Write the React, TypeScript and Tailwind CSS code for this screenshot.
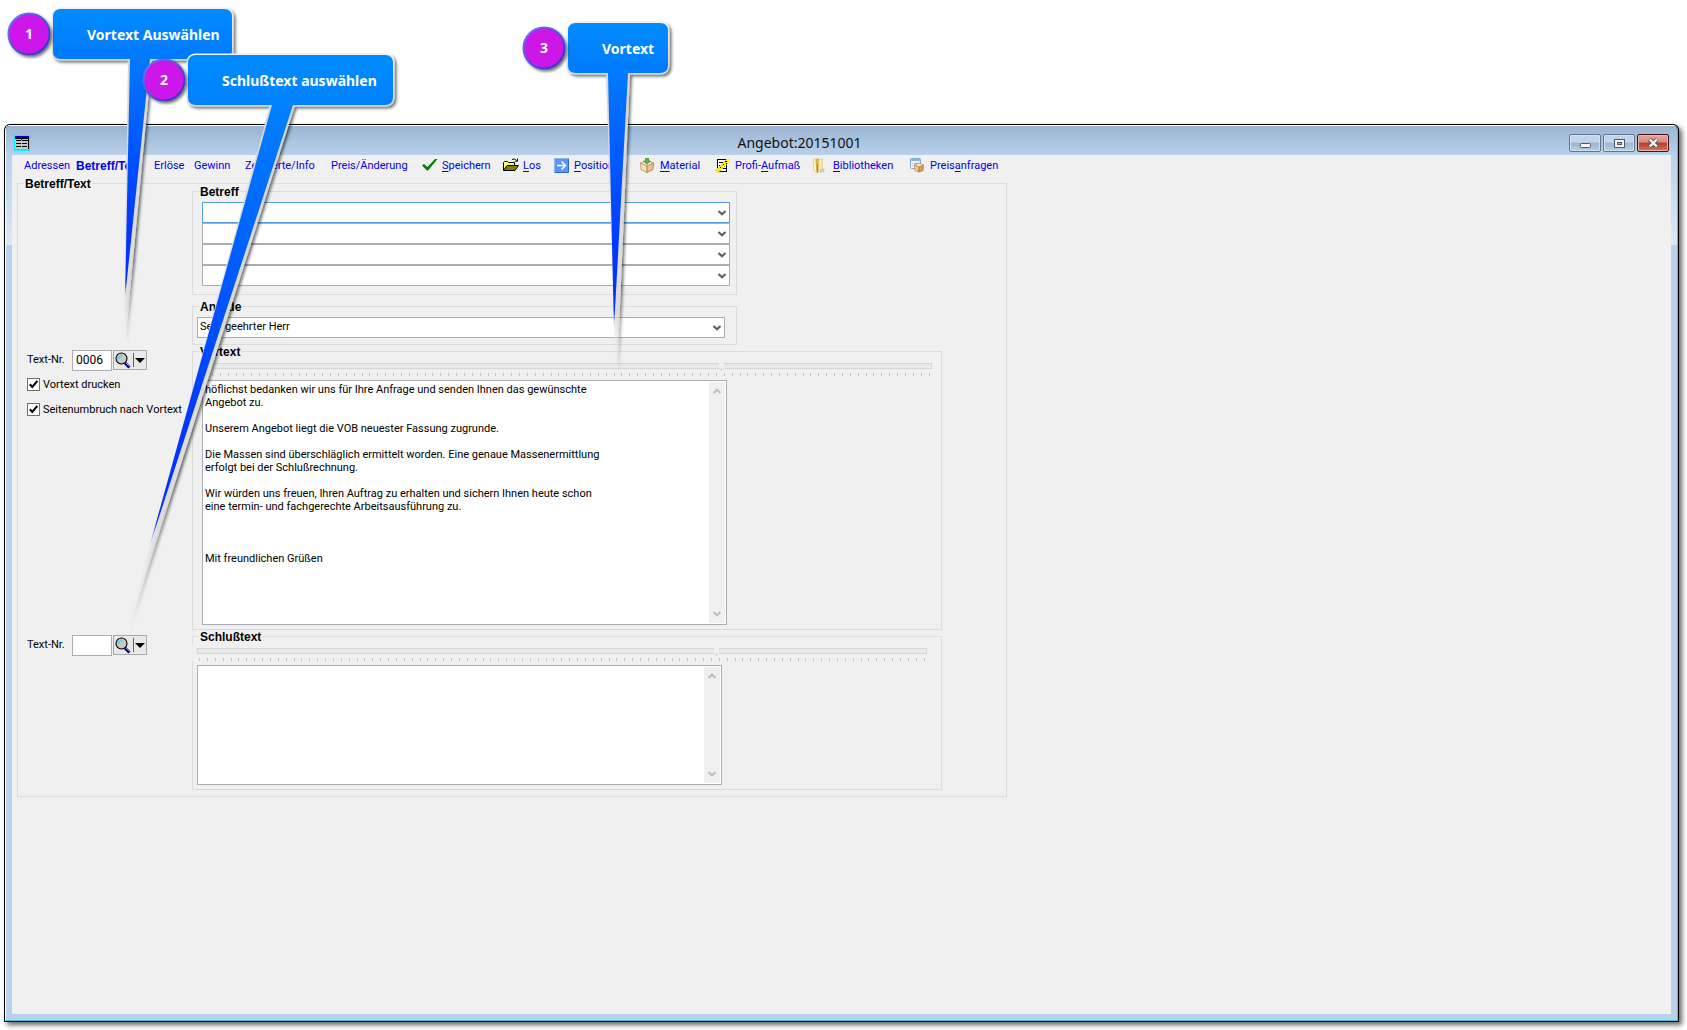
import React, { useState } from "react";

const VORTEXT = `höflichst bedanken wir uns für Ihre Anfrage und senden Ihnen das gewünschte
Angebot zu.

Unserem Angebot liegt die VOB neuester Fassung zugrunde.

Die Massen sind überschläglich ermittelt worden. Eine genaue Massenermittlung
erfolgt bei der Schlußrechnung.

Wir würden uns freuen, Ihren Auftrag zu erhalten und sichern Ihnen heute schon
eine termin- und fachgerechte Arbeitsausführung zu.



Mit freundlichen Grüßen`;

/* ---------- icons ---------- */

function FormIcon() {
  return (
    <svg width="16" height="16" viewBox="0 0 16 16" shapeRendering="crispEdges" aria-hidden="true">
      <rect width="16" height="16" fill="#00f0ff" />
      <rect x="1" y="1" width="14" height="13" fill="#c8c8c8" />
      <rect x="1" y="1" width="14" height="2" fill="#0000c0" />
      <path d="M1 3h14v1H1zM14 3h1v11h-1zM2 5h5v1H2zM8 5h6v1H8zM2 8h5v1H2zM8 8h5v1H8zM2 11h5v1H2zM8 11h5v1H8zM7 3h1v2H7z" fill="#000" />
    </svg>
  );
}

function CheckIcon() {
  return (
    <svg width="16" height="16" viewBox="0 0 16 16" aria-hidden="true">
      <path d="M0 7.500 2 6l3.500 3L13 1h2.500L6 12.500H5z" fill="#008000" />
    </svg>
  );
}

function FolderIcon() {
  return (
    <svg width="16" height="16" viewBox="0 0 16 16" aria-hidden="true">
      <path d="M.5 12.500v-8l1-1h3l1 1h6v3" fill="#ffff66" stroke="#000" />
      <path d="M.5 12.500 4 7.500h11.500l-3.500 5z" fill="#808000" stroke="#000" />
      <path d="M9 2C10 .5 12 .5 13.500 2.500M14.500.5v2.700h-2.700" fill="none" stroke="#000" />
    </svg>
  );
}

function ArrowIcon() {
  return (
    <svg width="16" height="16" viewBox="0 0 16 16" aria-hidden="true">
      <rect x=".5" y=".5" width="14" height="14" fill="#5b94f8" stroke="#8fb3f5" />
      <path d="M14.500 1v13.500H1" fill="none" stroke="#3565c4" />
      <path d="M3 7.500h8M7.500 3.500l4 4-4 4" fill="none" stroke="#fff" strokeWidth="1.600" />
    </svg>
  );
}

function BoxIcon() {
  return (
    <svg width="16" height="16" viewBox="0 0 16 16" aria-hidden="true">
      <path d="M.5 5 7 8v6.500L1 11.500z" fill="#f6e2bb" stroke="#b98f4e" strokeWidth=".8" />
      <path d="M13.500 5 7 8v6.500l6-3z" fill="#e6c48c" stroke="#a87b3a" strokeWidth=".8" />
      <path d="M.5 5 7 2.500 13.500 5 7 8z" fill="#fdf3dc" stroke="#b98f4e" strokeWidth=".8" />
      <path d="M5.500 0h3v3h2L7 6.500 3.500 3h2z" fill="#5cb84a" stroke="#2e7d27" strokeWidth=".6" />
    </svg>
  );
}

function MeasureIcon() {
  return (
    <svg width="16" height="16" viewBox="0 0 16 16" shapeRendering="crispEdges" aria-hidden="true">
      <path d="M2.500 1.500h9v12h-9z" fill="#fff" stroke="#000" />
      <path d="M4 4.500h5M4 7.500h3M8 10.500h3" stroke="#000" />
      <path d="M.5 12.500 11.500 1l2.500 1.500L3 14.500z" fill="#ffee00" stroke="#d8c800" strokeWidth=".5" />
      <path d="M2.500 12.500 12 2.500" stroke="#000" strokeDasharray="1 3" />
    </svg>
  );
}

function BinderIcon() {
  return (
    <svg width="16" height="16" viewBox="0 0 16 16" aria-hidden="true">
      <path d="M.5 1.500 3 .5l1 12L2.500 14 .5 12z" fill="#fff3b8" stroke="#e0c468" strokeWidth=".6" />
      <path d="M3 1.500 5.500.5v12L4 15z" fill="#d8b64c" stroke="#b89434" strokeWidth=".5" />
      <path d="M5.500 2.500 9.500 1v11L5.500 14.500z" fill="#fbe9a0" stroke="#e0c468" strokeWidth=".6" />
      <path d="M4.500 6v8.500" stroke="#8a8a8a" />
      <path d="M7.500 11.500 11 11v2.500L7.500 14.500z" fill="#d4d4d4" stroke="#aaa" strokeWidth=".5" />
    </svg>
  );
}

function PriceIcon() {
  return (
    <svg width="16" height="16" viewBox="0 0 16 16" aria-hidden="true">
      <rect x=".5" y=".5" width="10" height="10" rx="1" fill="#e9f3fc" stroke="#7fa9cf" />
      <rect x="1" y="1" width="9" height="2" fill="#86b6e3" />
      <path d="M2 5.500h1M4 5.500h5M2 7.500h1M4 7.500h2" stroke="#a5c6e4" />
      <path d="M4.500 7l4.500 2v5L5 12.500z" fill="#f1cf96" stroke="#b5803a" strokeWidth=".7" />
      <path d="M13.500 7 9 9v5l4-1.500z" fill="#d99f55" stroke="#a87030" strokeWidth=".7" />
      <path d="M4.500 7 9 5l4.500 2L9 9z" fill="#fbe6c0" stroke="#b5803a" strokeWidth=".7" />
    </svg>
  );
}

function SearchIcon() {
  return (
    <svg width="16" height="17" viewBox="0 0 16 17" aria-hidden="true">
      <path d="M10 11l4.500 4.500" stroke="#000080" strokeWidth="3" />
      <path d="M10.500 10.500l4 4" stroke="#b8b8ff" strokeWidth=".8" />
      <circle cx="6.500" cy="6.500" r="5.500" fill="#c8c8c8" stroke="#000" strokeWidth="1.100" />
      <path d="M3.500 7C3.500 4.800 4.800 3.500 7 3.500" fill="none" stroke="#00e5ff" strokeWidth="1.400" strokeDasharray="3 1" />
    </svg>
  );
}

function Chevron({ up = false, color }: { up?: boolean; color: string }) {
  return (
    <svg width="8" height="6" viewBox="0 0 8 6" className={up ? "rotate-180" : ""} aria-hidden="true">
      <path d="M.5 1 4 4.300 7.500 1" fill="none" stroke={color} strokeWidth="2.200" />
    </svg>
  );
}

/* ---------- form parts ---------- */

function Group({
  title,
  className,
  inner = "",
  children,
}: {
  title: string;
  className: string;
  inner?: string;
  children: React.ReactNode;
}) {
  return (
    <fieldset className={"min-w-0 border border-[#dcdcdc] " + className}>
      <legend className="ml-[6px] h-px px-px text-xs leading-[3px] font-bold whitespace-nowrap text-black">{title}</legend>
      <div className={inner}>{children}</div>
    </fieldset>
  );
}

function Combo({ label, value = "", active = false }: { label: string; value?: string; active?: boolean }) {
  return (
    <div className="relative h-[21px] w-[528px]">
      <select
        aria-label={label}
        defaultValue={value}
        className={
          "h-full w-full appearance-none border bg-white pr-5 pl-[2px] font-['Roboto',sans-serif] outline-none " +
          (active ? "border-[#569de5]" : "border-[#abadb3]")
        }
      >
        <option>{value}</option>
      </select>
      <span className="pointer-events-none absolute inset-y-0 right-1 flex items-center">
        <Chevron color="#606060" />
      </span>
    </div>
  );
}

function WidthSlider({ label }: { label: string }) {
  return (
    <div className="w-[730px]">
      <input
        type="range"
        aria-label={label}
        min={0}
        max={730}
        defaultValue={521}
        className="block h-[6px] w-full appearance-none border border-[#d6d6d6] bg-[#e7eaea] outline-none [&::-webkit-slider-thumb]:h-[10px] [&::-webkit-slider-thumb]:w-[5px] [&::-webkit-slider-thumb]:appearance-none [&::-webkit-slider-thumb]:bg-[linear-gradient(#f0f0f0_70%,#c4c4c4)] [&::-webkit-slider-thumb]:[clip-path:polygon(0_0,100%_0,100%_75%,50%_100%,0_75%)]"
      />
      <div className="mt-1 flex h-[3px] justify-between px-[2px]">
        {Array.from({ length: 93 }, (_, i) => (
          <span key={i} className="w-px bg-[#c4c4c4]" />
        ))}
      </div>
    </div>
  );
}

function Memo({ label, text, className }: { label: string; text: string; className: string }) {
  return (
    <div className={"mt-1 flex w-[525px] border border-[#abadb3] bg-white p-px " + className}>
      <textarea
        aria-label={label}
        defaultValue={text}
        className="block flex-1 resize-none overflow-hidden pt-px pl-px font-['Roboto',sans-serif] leading-[13px] whitespace-pre outline-none"
      />
      <div className="flex w-4 flex-col justify-between bg-[#f0f0f0] py-[6px]">
        <button type="button" aria-label="Nach oben" className="flex justify-center">
          <Chevron up color="#bfbfbf" />
        </button>
        <button type="button" aria-label="Nach unten" className="flex justify-center">
          <Chevron color="#bfbfbf" />
        </button>
      </div>
    </div>
  );
}

function TextNumber({ id, value }: { id: string; value: string }) {
  return (
    <div className="flex items-start pl-[9px]">
      <label htmlFor={id} className="w-[45px] leading-5">
        Text-Nr.
      </label>
      <input
        id={id}
        defaultValue={value}
        className="h-[21px] w-10 border border-[#abadb3] bg-white pb-px pl-[3px] text-xs outline-none"
      />
      <button
        type="button"
        aria-label="Text suchen"
        className="ml-px flex h-5 w-[34px] items-center border border-[#a9a9a9] bg-[#e9e9e9] pl-px"
      >
        <SearchIcon />
        <span className="ml-[2px] h-[14px] w-px bg-[#606060]" />
        <svg width="10" height="5" viewBox="0 0 10 5" className="ml-px" aria-hidden="true">
          <path d="M0 0h10L5 5z" fill="#000" />
        </svg>
      </button>
    </div>
  );
}

function Check({ label, className }: { label: string; className: string }) {
  const [on, setOn] = useState(true);
  return (
    <label className={"relative flex items-center gap-[3px] pl-[9px] leading-[13px] whitespace-nowrap " + className}>
      <input
        type="checkbox"
        checked={on}
        onChange={() => setOn(!on)}
        className="size-[13px] appearance-none border border-[#707070] bg-white"
      />
      {on && (
        <svg width="9" height="9" viewBox="0 0 9 9" className="pointer-events-none absolute left-[11px]" aria-hidden="true">
          <path d="M.8 4.300 3.300 7 8.300 1" fill="none" stroke="#000" strokeWidth="2" />
        </svg>
      )}
      {label}
    </label>
  );
}

/* ---------- toolbar ---------- */

const tools = [
  { icon: <CheckIcon />, pre: "", key: "S", post: "peichern" },
  { icon: <FolderIcon />, pre: "", key: "L", post: "os" },
  { icon: <ArrowIcon />, pre: "", key: "P", post: "ositionen" },
  { icon: <BoxIcon />, pre: "", key: "M", post: "aterial" },
  { icon: <MeasureIcon />, pre: "Profi-", key: "A", post: "ufmaß" },
  { icon: <BinderIcon />, pre: "", key: "B", post: "ibliotheken" },
  { icon: <PriceIcon />, pre: "Preis", key: "a", post: "nfragen" },
];

function Toolbar() {
  return (
    <nav className="mb-[6px] grid h-[22px] grid-cols-[52px_78px_40px_51px_86px_91px_81px_51px_86px_75px_98px_97px_auto] items-center justify-start pl-3 text-[#0000f0]">
      {["Adressen", "Betreff/Text", "Erlöse", "Gewinn", "Zeitwerte/Info", "Preis/Änderung"].map((t) => (
        <button
          key={t}
          type="button"
          className={
            "text-left whitespace-nowrap " + (t === "Betreff/Text" ? "font-['Liberation_Sans',sans-serif] text-xs font-bold" : "")
          }
        >
          {t}
        </button>
      ))}
      {tools.map((t) => (
        <button key={t.pre + t.key + t.post} type="button" className="flex items-center gap-1 whitespace-nowrap">
          {t.icon}
          <span>
            {t.pre}
            <u className="underline-offset-2">{t.key}</u>
            {t.post}
          </span>
        </button>
      ))}
    </nav>
  );
}

/* ---------- title bar ---------- */

function TitleBar() {
  const plain =
    "flex h-[18px] w-8 items-center justify-center rounded-[2px] border border-[#62758f] bg-[linear-gradient(#c3d5e8_45%,#9cb5cf_50%,#b8cfe6)] shadow-[inset_0_0_0_1px_#d3e2f1]";
  return (
    <header className="flex h-[29px] items-start bg-[linear-gradient(#9ab4d2,#b9d1ea)] pt-2 pr-2 pl-2">
      <span className="mt-px">
        <FormIcon />
      </span>
      <h1 className="flex-1 text-center font-['Noto_Sans'] text-sm leading-[18px] text-[#111]">Angebot:20151001</h1>
      <div className="flex gap-[2px]">
        <button type="button" aria-label="Minimieren" className={plain}>
          <svg width="11" height="5" viewBox="0 0 11 5" className="mt-1" aria-hidden="true">
            <rect x=".5" y=".5" width="10" height="4" rx="1" fill="#f4f4f4" stroke="#535666" />
          </svg>
        </button>
        <button type="button" aria-label="Maximieren" className={plain}>
          <svg width="11" height="9" viewBox="0 0 11 9" aria-hidden="true">
            <rect x=".5" y=".5" width="10" height="8" fill="#f4f4f4" stroke="#535666" />
            <rect x="3.500" y="3.500" width="4" height="2" fill="#9cb5cf" stroke="#535666" />
          </svg>
        </button>
        <button
          type="button"
          aria-label="Schließen"
          className="flex h-[18px] w-8 items-center justify-center rounded-[2px] border border-[#43101a] bg-[linear-gradient(#e3a69c_0%,#d98a7d_45%,#b83a22_50%,#d27a66)] shadow-[inset_0_0_0_1px_#e8b5ab]"
        >
          <svg width="13" height="10" viewBox="0 0 13 10" aria-hidden="true">
            <path d="M2.500 1.500 10 8.500M10 1.500 2.500 8.500" stroke="#535666" strokeWidth="4.400" />
            <path d="M2.800 1.500 9.800 8.500M9.800 1.500 2.800 8.500" stroke="#f7f7f7" strokeWidth="2.400" />
          </svg>
        </button>
      </div>
    </header>
  );
}

/* ---------- callouts ---------- */

/* a/b: where the tail leaves the box; tip: end of the blue tail; end: end of its fading edge */
type Note = { n: string; x: number; y: number; w: number; a: number; b: number; tip: [number, number]; end: [number, number] };

const notes: Note[] = [
  { n: "1", x: 53, y: 9, w: 179, a: 130, b: 150, tip: [125, 298], end: [124, 344] },
  { n: "2", x: 188, y: 55, w: 205, a: 272, b: 293, tip: [149, 548], end: [126, 634] },
  { n: "3", x: 568, y: 23, w: 100, a: 608, b: 628, tip: [614, 328], end: [616, 376] },
];

function CalloutShapes() {
  return (
    <svg width="700" height="680" viewBox="0 0 700 680" className="pointer-events-none absolute top-0 left-0" aria-hidden="true">
      <defs>
        <filter id="soft" x="-20%" y="-10%" width="150%" height="120%">
          <feDropShadow dx="2" dy="2" stdDeviation="1.500" floodColor="#000" floodOpacity=".55" />
        </filter>
        <linearGradient id="ring" x1="0" y1="0" x2="1" y2="1">
          <stop offset="0" stopColor="#6f7cf5" />
          <stop offset="1" stopColor="#2a2fc0" />
        </linearGradient>
      </defs>
      {notes.map((c) => {
        const r = c.x + c.w;
        const bottom = c.y + 50;
        const top = `M${c.x + 8} ${c.y}H${r - 8}Q${r} ${c.y} ${r} ${c.y + 8}V${bottom - 8}Q${r} ${bottom} ${r - 8} ${bottom}`;
        const close = `H${c.x + 8}Q${c.x} ${bottom} ${c.x} ${bottom - 8}V${c.y + 8}Q${c.x} ${c.y} ${c.x + 8} ${c.y}Z`;
        const body = `${top}H${c.b}L${c.tip[0]} ${c.tip[1]}L${c.a} ${bottom}${close}`;
        return (
          <g key={c.n}>
            <linearGradient id={"fill" + c.n} gradientUnits="userSpaceOnUse" x1="0" y1={c.y} x2="0" y2={c.tip[1]}>
              <stop offset="0" stopColor="#008cff" />
              <stop offset=".75" stopColor="#0038ff" />
              <stop offset=".95" stopColor="#0030ff" />
              <stop offset="1" stopColor="#0030ff" stopOpacity="0" />
            </linearGradient>
            <linearGradient id={"edge" + c.n} gradientUnits="userSpaceOnUse" x1="0" y1={bottom} x2="0" y2={c.end[1]}>
              <stop offset="0" stopColor="#d6d6d6" />
              <stop offset=".7" stopColor="#dedede" />
              <stop offset="1" stopColor="#f0f0f0" stopOpacity="0" />
            </linearGradient>
            <linearGradient id={"rim" + c.n} gradientUnits="userSpaceOnUse" x1="0" y1={c.y} x2="0" y2={bottom}>
              <stop offset="0" stopColor="#f0f0f0" />
              <stop offset="1" stopColor="#d6d6d6" />
            </linearGradient>
            <g filter="url(#soft)">
              <path d={`${top}${close}`} fill="#d6d6d6" stroke={`url(#rim${c.n})`} strokeWidth="3" />
              <path d={`M${c.a - 2} ${bottom}H${c.b + 2}L${c.end[0] + 1} ${c.end[1]}H${c.end[0]}Z`} fill={`url(#edge${c.n})`} />
            </g>
            <path d={body} fill={`url(#fill${c.n})`} />
            <circle cx={c.x - 24} cy={c.y + 25} r="20.500" fill="#cc14ea" stroke="url(#ring)" strokeWidth="2" filter="url(#soft)" />
          </g>
        );
      })}
    </svg>
  );
}

function Callouts() {
  const badge = "absolute flex size-10 items-center justify-center";
  const box = "absolute flex h-[50px] items-center whitespace-nowrap";
  return (
    <div className="pointer-events-none absolute top-0 left-0 font-['Noto_Sans'] text-sm font-bold text-white">
      <CalloutShapes />
      <span className={badge + " top-[14px] left-[9px]"}>1</span>
      <span className={box + " top-[10px] left-[87px]"}>Vortext Auswählen</span>
      <span className={badge + " top-[60px] left-[144px]"}>2</span>
      <span className={box + " top-[56px] left-[222px]"}>Schlußtext auswählen</span>
      <span className={badge + " top-[28px] left-[524px]"}>3</span>
      <span className={box + " top-[24px] left-[602px]"}>Vortext</span>
    </div>
  );
}

/* ---------- page ---------- */

export default function App() {
  return (
    <div className="relative flex min-h-screen flex-col bg-white pt-[124px] pr-2 pb-2 pl-1 text-[11px] text-black">
      <div className="flex flex-1 flex-col rounded-t-[6px] bg-black p-px shadow-[3px_3px_5px_rgba(0,0,0,0.6)]">
        <div className="flex flex-1 flex-col overflow-hidden rounded-t-[5px] border border-t-white border-r-[#2fcbe0] border-b-[#2fcbe0] border-l-white">
          <TitleBar />
          <div className="flex flex-1 flex-col bg-[#b9d1ea] bg-[linear-gradient(#b9d1ea,#dce9f7)] bg-[length:100%_90px] bg-no-repeat px-[6px] pb-[6px] font-['Roboto',sans-serif]">
            <main className="flex-1 bg-[#f0f0f0]">
              <Toolbar />
              <div className="font-['Roboto',sans-serif] [&_legend]:font-['Liberation_Sans',sans-serif]">
                <Group title="Betreff/Text" className="ml-[5px] w-[990px] pb-[6px]" inner="grid grid-cols-[174px_auto] justify-start gap-y-[5px]">
                  <Group title="Betreff" className="col-start-2 mt-[7px] w-[545px]" inner="px-[9px] pt-[10px] pb-2">
                    <Combo label="Betreff Zeile 1" active />
                    <Combo label="Betreff Zeile 2" />
                    <Combo label="Betreff Zeile 3" />
                    <Combo label="Betreff Zeile 4" />
                  </Group>
                  <Group title="Anrede" className="col-start-2 mt-[6px] w-[545px]" inner="px-1 pt-[10px] pb-[6px]">
                    <Combo label="Anrede" value="Sehr geehrter Herr" />
                  </Group>
                  <div>
                    <TextNumber id="vortext-nr" value="0006" />
                    <Check label="Vortext drucken" className="mt-[7px]" />
                    <Check label="Seitenumbruch nach Vortext" className="mt-3" />
                  </div>
                  <Group title="Vortext" className="mt-px w-[750px]" inner="pt-[11px] pb-1 pl-[9px]">
                    <WidthSlider label="Breite Vortext" />
                    <Memo label="Vortext" text={VORTEXT} className="h-[245px]" />
                  </Group>
                  <TextNumber id="schlusstext-nr" value="" />
                  <Group title="Schlußtext" className="mt-px w-[750px]" inner="pt-2 pb-1 pl-1">
                    <div className="-ml-[5px] bg-[#f0f0f0] pt-[3px] pl-[5px]">
                      <WidthSlider label="Breite Schlußtext" />
                    </div>
                    <Memo label="Schlußtext" text="" className="h-[120px]" />
                  </Group>
                </Group>
              </div>
            </main>
          </div>
        </div>
      </div>
      <Callouts />
    </div>
  );
}
